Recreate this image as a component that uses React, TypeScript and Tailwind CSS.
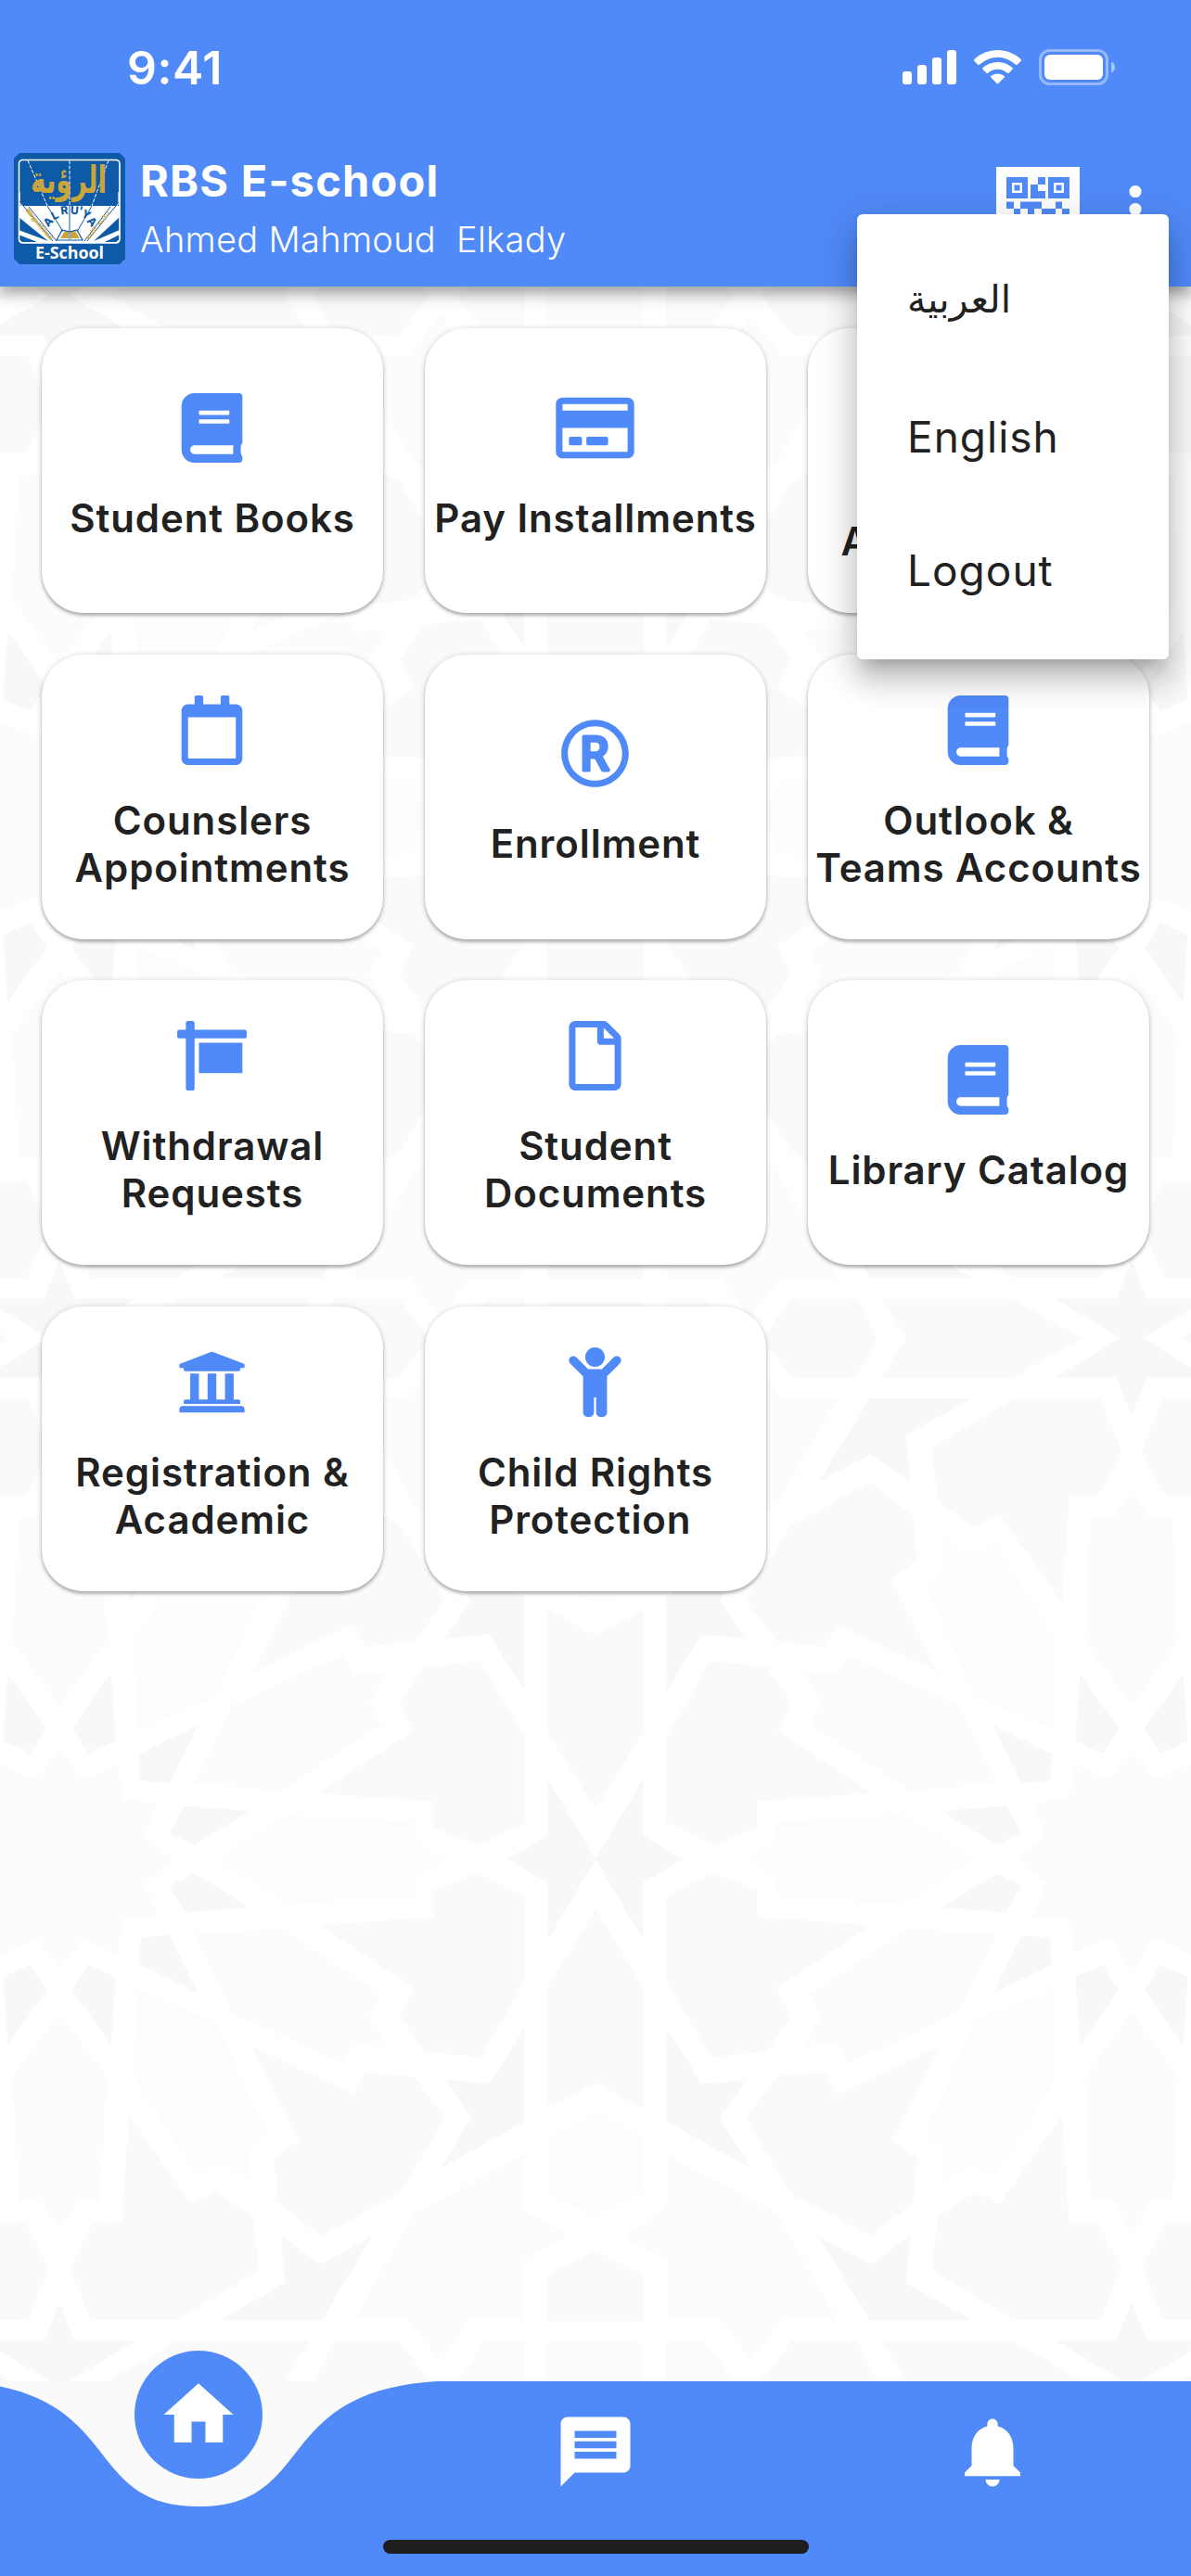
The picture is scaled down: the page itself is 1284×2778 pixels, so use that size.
import React from "react";
import type { IconType } from "react-icons";
import {
  FaBook,
  FaChild,
  FaRegCalendar,
  FaRegCreditCard,
  FaRegFile,
  FaRegRegistered,
  FaSign,
  FaUniversity,
} from "react-icons/fa";
import { MdHome, MdMessage, MdNotifications } from "react-icons/md";

interface Tile {
  icon: IconType;
  lines: string[];
}

const tiles: Tile[] = [
  { icon: FaBook, lines: ["Student Books"] },
  { icon: FaRegCreditCard, lines: ["Pay Installments"] },
  { icon: FaRegCalendar, lines: ["\u00a0", "Appointments"] },
  { icon: FaRegCalendar, lines: ["Counslers", "Appointments"] },
  { icon: FaRegRegistered, lines: ["Enrollment"] },
  { icon: FaBook, lines: ["Outlook &", "Teams Accounts"] },
  { icon: FaSign, lines: ["Withdrawal", "Requests"] },
  { icon: FaRegFile, lines: ["Student", "Documents"] },
  { icon: FaBook, lines: ["Library Catalog"] },
  { icon: FaUniversity, lines: ["Registration &", "Academic"] },
  { icon: FaChild, lines: ["Child Rights", "Protection\u00a0"] },
];

// One quarter of the girih tile, mirrored to fill the rest
const ornament = [
  { fill: "#f8f8f8", points: "668,520 784,520 721,678 721,566" },
  { fill: "#fafafa", points: "784,618 721,770 721,1010 784,960" },
  { fill: "#fdfdfd", points: "784,1020 721,1070 721,1174 784,1224" },
  { fill: "#fafafa", points: "784,1289 721,1337 721,1428 784,1428" },
  { fill: "#fcfcfc", points: "784,1470 721,1470 721,1545 784,1545" },
  { fill: "#fafafa", points: "629,547 690,592 690,762 632,909 558,898 526,828 545,773 420,650 571,634 571,582" },
  { fill: "#fdfdfd", points: "288,520 585,520 545,556 545,593 380,608" },
  { fill: "#f8f8f8", points: "256,548 327,615 243,625 223,572" },
  { fill: "#f8f8f8", points: "185,675 223,669 260,783 183,727" },
  { fill: "#fcfcfc", points: "256,668 370,655 502,785 485,830 512,890 465,883 452,922 305,822" },
  { fill: "#fcfcfc", points: "78,520 228,520 190,568 209,632 160,636 156,707 108,676 78,737" },
  { fill: "#f8f8f8", points: "116,728 152,752 146,885 95,777" },
  { fill: "#fcfcfc", points: "78,822 140,948 132,1190 103,1190 78,1248" },
  { fill: "#fdfdfd", points: "180,775 285,840 350,1062 325,1090 326,1150 290,1115 258,1140 178,950" },
  { fill: "#fafafa", points: "332,887 465,983 481,938 545,948 586,1028 527,1176 422,1260 366,1196 360,1108 394,1072" },
  { fill: "#f8f8f8", points: "586,954 644,962 690,852 690,1036 580,1127 620,1028" },
  { fill: "#fafafa", points: "170,1025 252,1198 284,1172 333,1223 341,1328 232,1426 120,1426 91,1324 122,1235 160,1235" },
  { fill: "#f8f8f8", points: "370,1262 422,1316 490,1262 423,1426 288,1426 375,1354" },
  { fill: "#fcfcfc", points: "690,1100 690,1208 747,1260 690,1308 690,1426 617,1426 580,1507 538,1426 465,1426 545,1217" },
  { fill: "#fafafa", points: "440,1467 525,1467 565,1545 413,1545" },
  { fill: "#fbfbfb", points: "640,1467 690,1467 690,1545 602,1545" },
  { fill: "#fafafa", points: "235,1467 407,1467 375,1545 143,1545" },
  { fill: "#f8f8f8", points: "78,1392 98,1467 178,1467 92,1545 78,1545" },
];

function Backdrop() {
  return (
    <svg className="absolute inset-0 h-full w-full" aria-hidden="true">
      <defs>
        <g id="quarter" transform="scale(.819 .5486) translate(-78 -520)">
          {ornament.map((cell) => (
            <polygon key={cell.points} fill={cell.fill} points={cell.points} />
          ))}
        </g>
        <pattern id="girih" x="64" y="572" width="1156" height="1124" patternUnits="userSpaceOnUse">
          <rect width="1156" height="1124" fill="#fff" />
          <use href="#quarter" />
          <use href="#quarter" transform="translate(1156 0) scale(-1 1)" />
          <use href="#quarter" transform="translate(0 1124) scale(1 -1)" />
          <use href="#quarter" transform="translate(1156 1124) scale(-1 -1)" />
        </pattern>
      </defs>
      <rect width="100%" height="100%" fill="url(#girih)" />
    </svg>
  );
}

function StatusIcons() {
  return (
    <svg className="h-10 w-[232px]" viewBox="972 53 232 40" fill="#fff">
      <rect x="973" y="77" width="10" height="14" rx="3" />
      <rect x="989" y="70" width="10" height="21" rx="3" />
      <rect x="1005" y="62" width="10" height="29" rx="3" />
      <rect x="1021" y="54" width="10" height="37" rx="3" />
      <path d="M1075.5 54c9.700 0 18.600 3.800 25.200 10.100.5.500.5 1.200 0 1.700l-3.900 3.900c-.5.500-1.200.5-1.700 0a28.400 28.400 0 0 0-39.200 0c-.5.500-1.200.5-1.700 0l-3.900-3.900c-.5-.5-.5-1.200 0-1.700A36.500 36.500 0 0 1 1075.500 54Z" />
      <path d="M1075.500 67c6.100 0 11.700 2.300 16 6.100.5.500.5 1.200 0 1.700l-3.900 3.900c-.5.500-1.200.5-1.700.1a15.700 15.700 0 0 0-20.800 0c-.5.400-1.200.4-1.700-.1l-3.900-3.900c-.5-.5-.5-1.200 0-1.700a24 24 0 0 1 16-6.100Z" />
      <path d="M1075.500 79.500c2.700 0 5.200.9 7.200 2.500.5.400.5 1.100 0 1.600l-6.400 6.500c-.4.500-1.200.5-1.600 0l-6.400-6.500c-.5-.5-.5-1.200 0-1.600 2-1.600 4.500-2.500 7.200-2.500Z" />
      <rect x="1121.500" y="54.500" width="72" height="36" rx="10" fill="none" stroke="#fff" strokeOpacity=".4" strokeWidth="3" />
      <rect x="1126" y="59" width="63" height="27" rx="6" />
      <path d="M1198 66.500c2.500 1 4 3.300 4 6s-1.500 5-4 6Z" opacity=".5" />
    </svg>
  );
}

function SchoolLogo() {
  return (
    <svg className="h-[120px] w-[120px] shrink-0" viewBox="0 0 120 120">
      <path d="M6 0h108l6 6v108l-6 6H6l-6-6V6Z" fill="#0f5aa6" />
      <path d="M5 57h109v36q0 4-4 4H9q-4 0-4-4Z" fill="#fff" />
      <path d="M5 69v14l32 12ZM5 88v5l4 3h16ZM114 69v14L86 95ZM114 88v5l-4 3H98Z" fill="#0f5aa6" />
      <path
        d="M6 42v12l38 41h8L42 74M113 42v12L79 95h-8l9-21"
        fill="none"
        stroke="#fff"
        strokeWidth="1.200"
      />
      <path d="M6 52l36 43M16 58l30 37M114 52L79 95M104 58L76 95M60 57v36M36 57l17 28M84 57L68 85" fill="none" stroke="#0f5aa6" strokeWidth="1" />
      <path d="M15 8l21 49M60 8v49M102 8L84 57" stroke="#fff" strokeWidth="1" strokeDasharray="4 1.500" />
      <rect x="5.500" y="7.500" width="108.500" height="89.500" rx="4" fill="none" stroke="#fff" strokeWidth="1.600" />
      <text transform="translate(59 43) scale(1 1.200)" textAnchor="middle" fontFamily="DejaVu Sans, sans-serif" fontWeight="700" fontSize="34" textLength="82" lengthAdjust="spacingAndGlyphs" fill="#c9a53a" direction="rtl">الرؤية</text>
      <g fontFamily="Inter, sans-serif" fontWeight="800" fontSize="12" fill="#0f5aa6" textAnchor="middle">
        <text transform="translate(40 77) rotate(-48)">A</text>
        <text transform="translate(46 71) rotate(-28)">L</text>
        <text transform="translate(55 66) rotate(-8)">R</text>
        <text transform="translate(65 66) rotate(4)">U</text>
        <text transform="translate(71 66) rotate(14)">'</text>
        <text transform="translate(76 70) rotate(28)">Y</text>
        <text transform="translate(81 77) rotate(48)">A</text>
      </g>
      <g fontFamily="Open Sans, sans-serif" fontWeight="700" fontSize="6.500" fill="#c9a53a">
        <text transform="translate(12 62) rotate(50)" textLength="42">Bilingual School</text>
        <text transform="translate(80 94) rotate(-51)" fontFamily="DejaVu Sans, sans-serif" textLength="38">ثنائية اللغة</text>
      </g>
      <path d="M50 92l5-8h4v8ZM61 84h5l5 8H61Z" fill="#c9a53a" />
      <path d="M46 94l6-11 8 2 8-2 6 11Z" fill="none" stroke="#0f5aa6" strokeWidth="1.200" />
      <text x="60" y="114" textAnchor="middle" fontFamily="Open Sans, sans-serif" fontWeight="700" fontSize="18.500" textLength="74" lengthAdjust="spacingAndGlyphs" fill="#fff">E-School</text>
    </svg>
  );
}

function QrIcon() {
  return (
    <svg className="h-[90px] w-[90px]" viewBox="0 0 90 90">
      <path d="M0 0h90v90H0z" fill="#fff" />
      <path
        fill="#508af8"
        fillRule="evenodd"
        d="M11 11h23v23H11zM17 17v11h11V17zM19.500 19.500h6v6h-6zM56 11h23v23H56zM62 17v11h11V17zM64.500 19.500h6v6h-6zM45 11h8v8h-8v7h8v8H37V19h8zM11 37.500h8V45h-8zM19 45h7v7.500h-7zM26 37.500h23V45h-8v8h-7v-8h-8zM49 45h15v8H49zM64 37.500h7V45h-7zM71 45h8v8h-8zM11 56h23v23H11zM17 62v11h11V62z"
      />
    </svg>
  );
}

function Header() {
  return (
    <header className="relative z-10 h-[309px] bg-[#508af8] text-white shadow-[0_12px_15px_rgba(0,0,0,0.14),0_6px_12px_rgba(0,0,0,0.24)]">
      <div className="flex h-[165px] justify-between pl-[137px] pr-20 pt-[53px]">
        <span className="-mt-1 h-12 text-[50px] font-semibold leading-[48px] tracking-[0.5px]">9:41</span>
        <StatusIcons />
      </div>
      <div className="flex pl-[15px]">
        <SchoolLogo />
        <div className="ml-4 flex-1 whitespace-pre">
          <h1 className="h-[61px] text-[47px] font-bold leading-[59px] tracking-[1.2px]">RBS E-school</h1>
          <p className="h-[65px] text-[38px] font-light leading-[65px] tracking-[0.3px]">Ahmed Mahmoud  Elkady</p>
        </div>
        <div className="flex gap-[53px] pr-[53px] pt-[15px]">
          <QrIcon />
          <svg className="h-[90px] w-[14px]" viewBox="0 0 14 90" fill="#fff">
            <circle cx="7" cy="26.500" r="6.600" />
            <circle cx="7" cy="45.500" r="6.600" />
            <circle cx="7" cy="64.500" r="6.600" />
          </svg>
        </div>
      </div>
    </header>
  );
}

function TileCard({ icon: Icon, lines }: Tile) {
  return (
    <button className="flex h-[307px] flex-col items-center justify-center rounded-[45px] bg-white pb-2 shadow-[0_3px_3px_rgba(0,0,0,0.2),0_1px_6px_rgba(0,0,0,0.2)]">
      <Icon className="mr-[2px] h-[75px] w-[85px] text-[#508af8]" />
      <span className="mt-[34px] whitespace-nowrap text-[42px] font-semibold leading-[51px] tracking-[0.9px] text-[#212121]">
        {lines.map((line) => (
          <span key={line} className="block">
            {line}
          </span>
        ))}
      </span>
    </button>
  );
}

function LanguageMenu() {
  return (
    <ul className="absolute left-[924px] top-[231px] z-20 flex h-[480px] w-[336px] flex-col rounded-md bg-white pl-[54px] pt-[24px] text-[46px] tracking-[1px] text-[#212121] shadow-[0_15px_15px_-9px_rgba(0,0,0,0.2),0_24px_30px_3px_rgba(0,0,0,0.14),0_9px_42px_6px_rgba(0,0,0,0.12)]">
      <li className="h-[144px] font-['DejaVu_Sans',sans-serif] text-[41px] leading-[136px] tracking-normal">العربية</li>
      <li className="h-[144px] leading-[144px]">English</li>
      <li className="h-[144px] leading-[144px]">Logout</li>
    </ul>
  );
}

function BottomNav() {
  return (
    <nav className="relative h-[210px] bg-[#fafafa] text-white">
      <svg className="absolute inset-0 h-full w-full" viewBox="0 0 1284 210" fill="#508af8">
        <path d="M-42.800 0C137 11.250 85.600 135 214 135S291 11.250 470.800 0H1284V210H-42.800Z" />
      </svg>
      <div className="absolute left-[145px] top-[-33px] flex h-[138px] w-[138px] items-center justify-center rounded-full bg-[#508af8]">
        <MdHome className="h-[90px] w-[90px]" />
      </div>
      <div className="relative grid grid-cols-3 justify-items-center pt-[31px]">
        <MdMessage className="col-start-2 h-[90px] w-[90px]" />
        <MdNotifications className="h-[90px] w-[90px]" />
      </div>
      <div className="relative mx-auto mt-[50px] h-[15px] w-[459px] rounded-full bg-[#1f1f1f]" />
    </nav>
  );
}

export default function App() {
  return (
    <div className="relative flex h-[2778px] w-[1284px] flex-col overflow-hidden bg-[#fafafa] font-['Inter',sans-serif]">
      <Header />
      <main className="relative flex-1">
        <Backdrop />
        <div className="relative grid grid-cols-3 gap-x-[45px] gap-y-[44.700px] p-[45px]">
          {tiles.map((tile, index) => (
            <TileCard key={index} {...tile} />
          ))}
        </div>
      </main>
      <BottomNav />
      <LanguageMenu />
    </div>
  );
}
